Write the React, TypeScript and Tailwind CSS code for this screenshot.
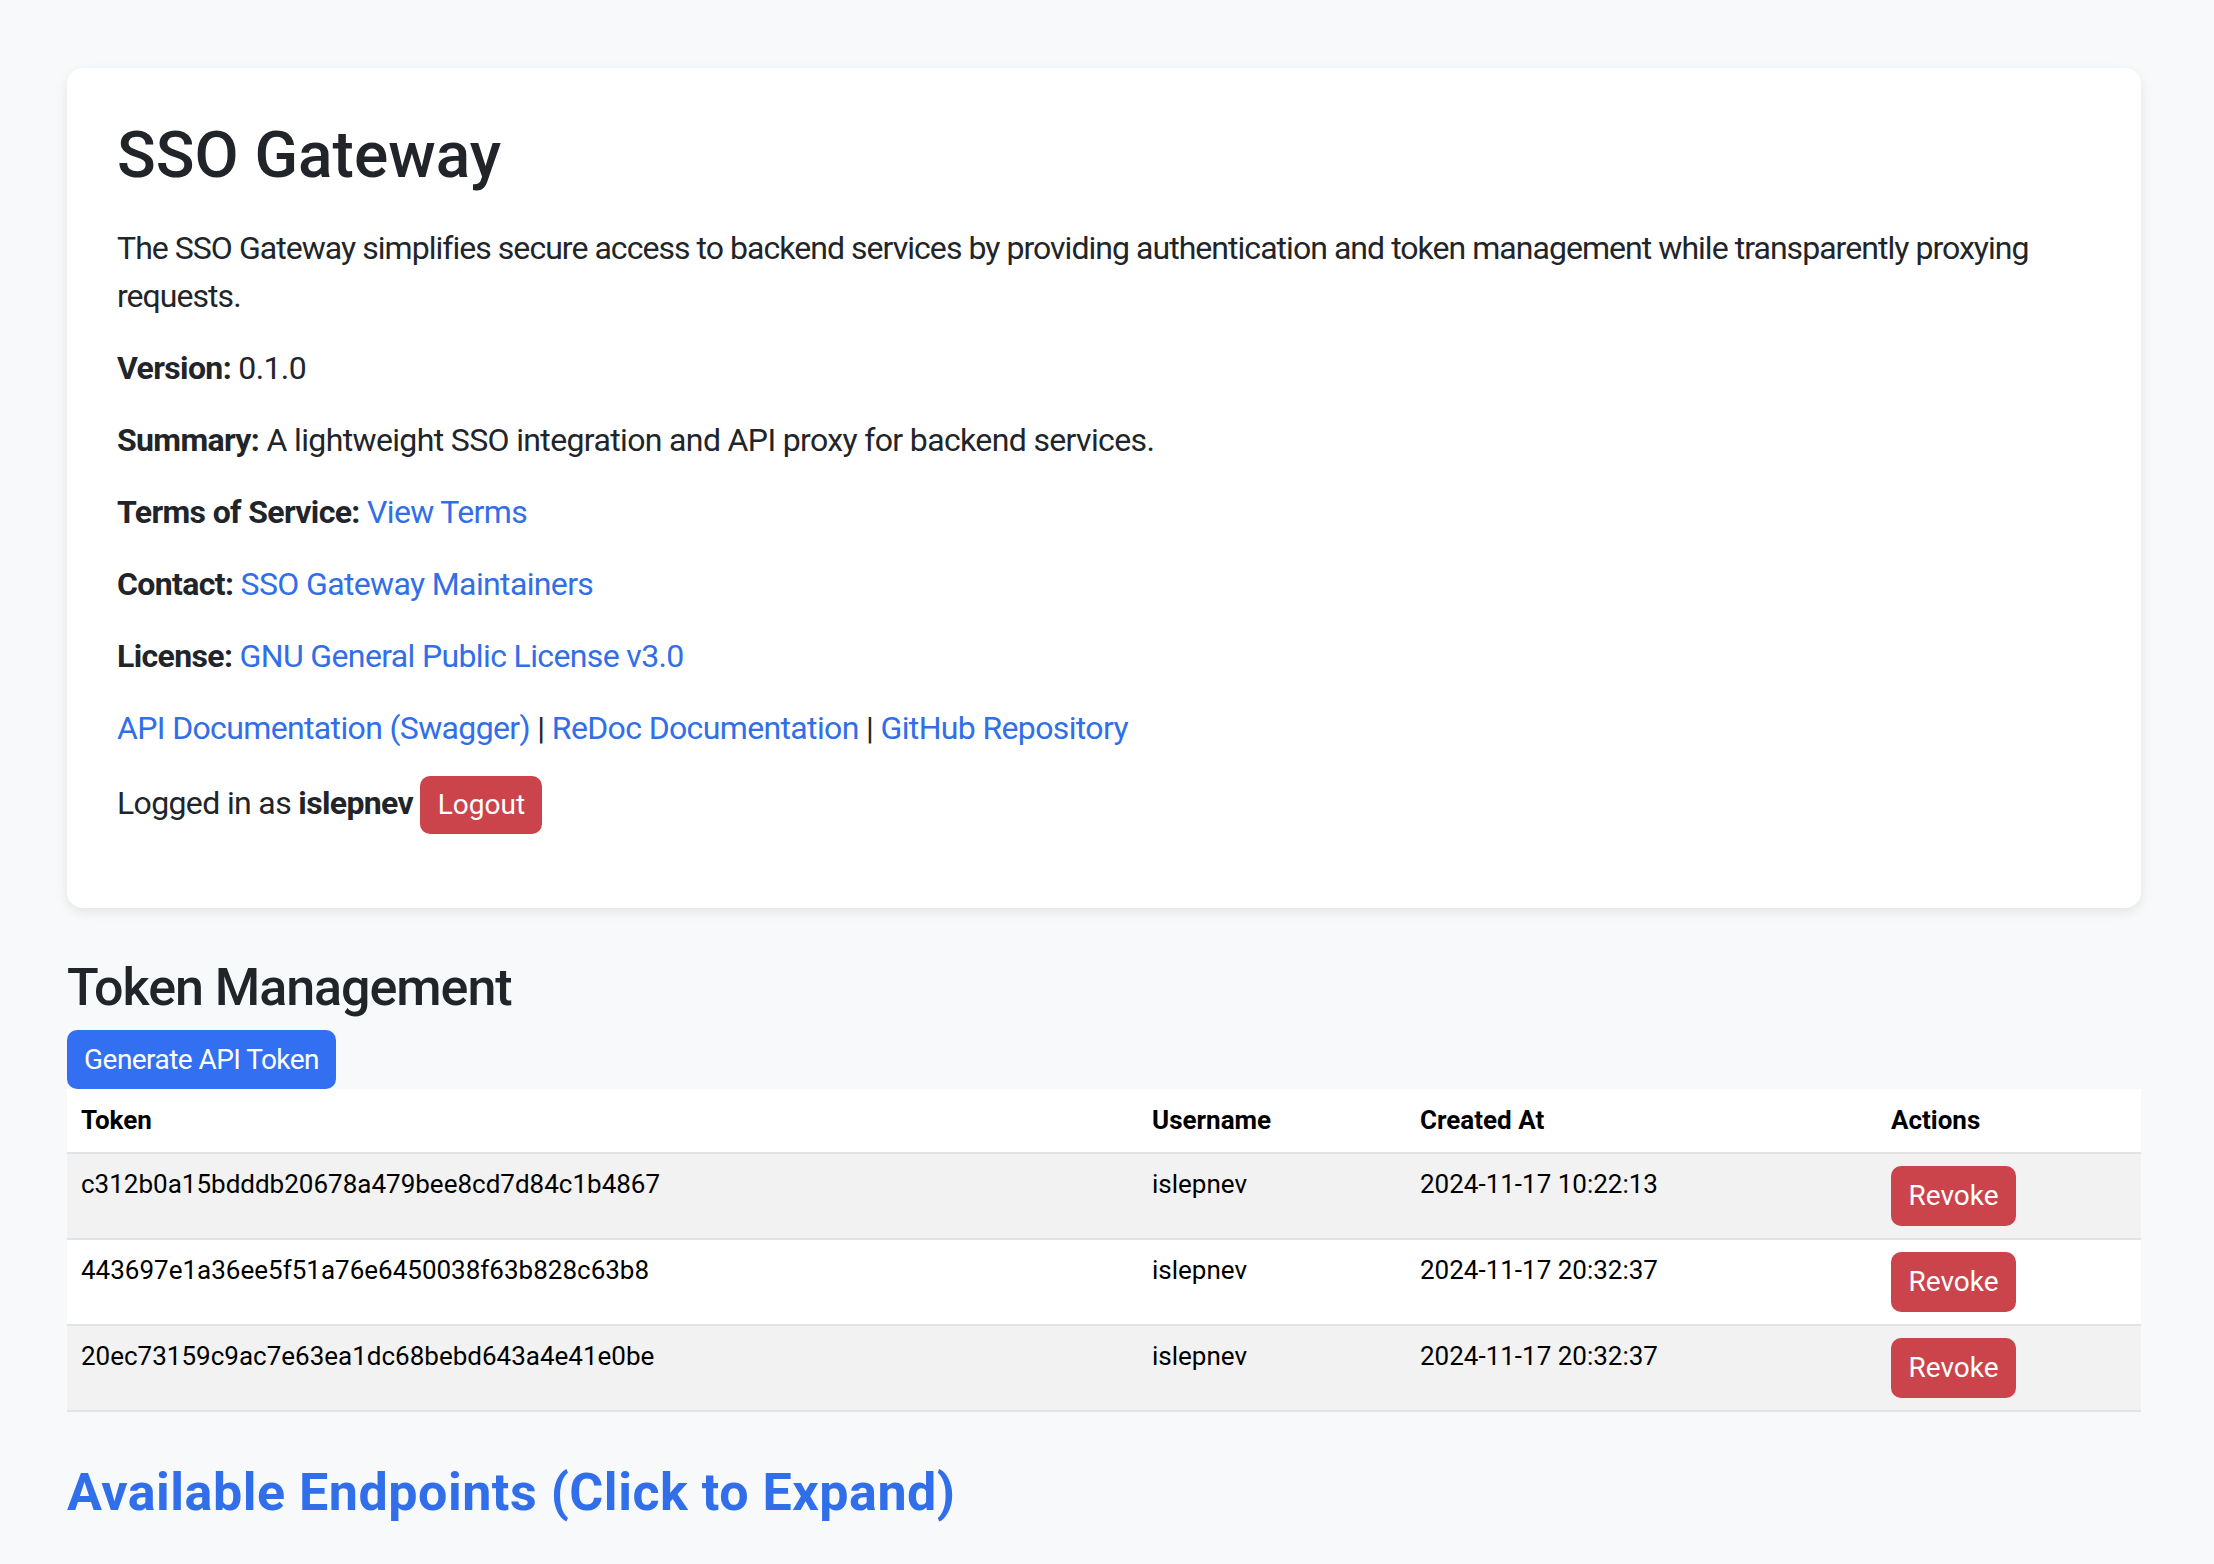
import React from 'react';

const tokens = [
  { token: 'c312b0a15bdddb20678a479bee8cd7d84c1b4867', user: 'islepnev', created: '2024-11-17 10:22:13' },
  { token: '443697e1a36ee5f51a76e6450038f63b828c63b8', user: 'islepnev', created: '2024-11-17 20:32:37' },
  { token: '20ec73159c9ac7e63ea1dc68bebd643a4e41e0be', user: 'islepnev', created: '2024-11-17 20:32:37' },
];

const Link: React.FC<{ children: React.ReactNode }> = ({ children }) => (
  <a href="#" className="text-[#316ee9] no-underline">
    {children}
  </a>
);

const Field: React.FC<{ label: string; children: React.ReactNode }> = ({ label, children }) => (
  <p className="mb-[24px]">
    <strong className="font-bold">{label}</strong> {children}
  </p>
);

export default function App() {
  return (
    <div
      className="min-h-screen bg-[#f8f9fa] text-[#212529] pl-[67px] pr-[73px] pt-[68px] pb-[60px]"
      style={{ fontFamily: 'Roboto, Inter, "Noto Sans", sans-serif' }}
    >
      <div className="bg-white rounded-[16px] shadow-[0_4px_12px_rgba(0,0,0,0.09)] pt-[49px] pb-[50px] px-[50px] text-[32px] leading-[48px] tracking-[-0.02em]">
        <h1 className="text-[64px] leading-[77px] font-medium mb-[30px] tracking-normal">SSO Gateway</h1>
        <p className="mb-[24px] tracking-[-0.03em]">
          The SSO Gateway simplifies secure access to backend services by providing authentication and token
          management while transparently proxying requests.
        </p>
        <Field label="Version:">0.1.0</Field>
        <Field label="Summary:">A lightweight SSO integration and API proxy for backend services.</Field>
        <Field label="Terms of Service:">
          <Link>View Terms</Link>
        </Field>
        <Field label="Contact:">
          <Link>SSO Gateway Maintainers</Link>
        </Field>
        <Field label="License:">
          <Link>GNU General Public License v3.0</Link>
        </Field>
        <p className="mb-[24px]">
          <Link>API Documentation (Swagger)</Link> | <Link>ReDoc Documentation</Link> |{' '}
          <Link>GitHub Repository</Link>
        </p>
        <p className="mb-[24px]">
          Logged in as <strong className="font-bold">islepnev</strong>{' '}
          <button className="inline-block bg-[#cb444b] text-white text-[28px] leading-[42px] w-[122px] py-[8px] rounded-[10px] tracking-normal">
            Logout
          </button>
        </p>
      </div>

      <h2 className="text-[52px] leading-[62px] font-medium mt-[49px] mb-[11px] tracking-[-0.02em]">Token Management</h2>
      <button className="bg-[#3370f1] text-white text-[28px] leading-[42px] w-[269px] h-[59px] rounded-[10px] whitespace-nowrap tracking-[-0.02em]">
        Generate API Token
      </button>

      <table className="w-full table-fixed border-collapse bg-white text-black text-[26px] leading-[37px]">
        <colgroup>
          <col className="w-[1071px]" />
          <col className="w-[268px]" />
          <col className="w-[471px]" />
          <col className="w-[264px]" />
        </colgroup>
        <thead>
          <tr className="border-b-2 border-[#e2e3e5]">
            <th className="text-left font-bold px-[14px] py-[13px]">Token</th>
            <th className="text-left font-bold px-[14px] py-[13px]">Username</th>
            <th className="text-left font-bold px-[14px] py-[13px]">Created At</th>
            <th className="text-left font-bold px-[14px] py-[13px]">Actions</th>
          </tr>
        </thead>
        <tbody>
          {tokens.map((t, i) => (
            <tr key={t.token} className={`border-b-2 border-[#e2e3e5] ${i % 2 === 0 ? 'bg-[#f2f2f2]' : 'bg-white'}`}>
              <td className="align-top px-[14px] py-[12px]">{t.token}</td>
              <td className="align-top px-[14px] py-[12px]">{t.user}</td>
              <td className="align-top px-[14px] py-[12px]">{t.created}</td>
              <td className="align-top px-[14px] py-[12px]">
                <button className="bg-[#cb444b] text-white text-[28px] leading-[42px] w-[125px] h-[60px] rounded-[10px]">
                  Revoke
                </button>
              </td>
            </tr>
          ))}
        </tbody>
      </table>

      <h2 className="text-[52px] leading-[62px] font-bold text-[#316ee9] mt-[50px] tracking-[0.01em]">
        <a href="#">Available Endpoints (Click to Expand)</a>
      </h2>
    </div>
  );
}
